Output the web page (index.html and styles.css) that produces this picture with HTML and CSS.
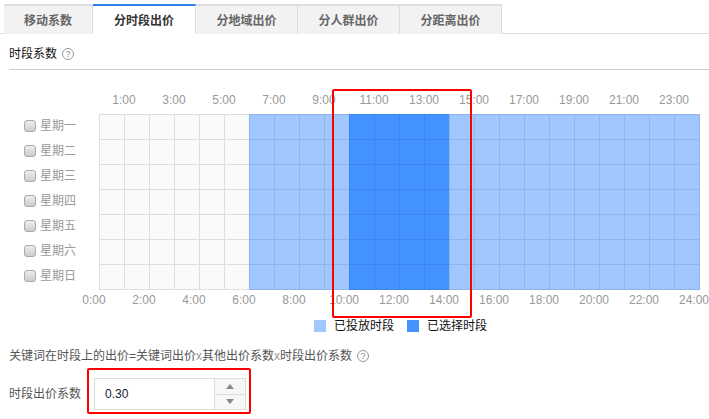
FILE: index.html
```
<!DOCTYPE html>
<html lang="zh-CN">
<head>
<meta charset="utf-8">
<title>时段系数</title>
<link rel="stylesheet" href="styles.css">
</head>
<body>
<nav class="tabs">
  <a class="tab tab-first">移动系数</a>
  <a class="tab active">分时段出价</a>
  <a class="tab">分地域出价</a>
  <a class="tab">分人群出价</a>
  <a class="tab">分距离出价</a>
</nav>
<div class="title">时段系数 <span class="help">?</span></div>
<div class="hours hours-top">
  <span>1:00</span><span>3:00</span><span>5:00</span><span>7:00</span><span>9:00</span><span>11:00</span><span>13:00</span><span>15:00</span><span>17:00</span><span>19:00</span><span>21:00</span><span>23:00</span>
</div>
<div class="week">
  <div class="row"><label class="day"><input type="checkbox" class="check">星期一</label><div class="seg off"></div><div class="seg on"></div><div class="seg sel"></div><div class="seg on rest"></div></div>
  <div class="row"><label class="day"><input type="checkbox" class="check">星期二</label><div class="seg off"></div><div class="seg on"></div><div class="seg sel"></div><div class="seg on rest"></div></div>
  <div class="row"><label class="day"><input type="checkbox" class="check">星期三</label><div class="seg off"></div><div class="seg on"></div><div class="seg sel"></div><div class="seg on rest"></div></div>
  <div class="row"><label class="day"><input type="checkbox" class="check">星期四</label><div class="seg off"></div><div class="seg on"></div><div class="seg sel"></div><div class="seg on rest"></div></div>
  <div class="row"><label class="day"><input type="checkbox" class="check">星期五</label><div class="seg off"></div><div class="seg on"></div><div class="seg sel"></div><div class="seg on rest"></div></div>
  <div class="row"><label class="day"><input type="checkbox" class="check">星期六</label><div class="seg off"></div><div class="seg on"></div><div class="seg sel"></div><div class="seg on rest"></div></div>
  <div class="row"><label class="day"><input type="checkbox" class="check">星期日</label><div class="seg off"></div><div class="seg on"></div><div class="seg sel"></div><div class="seg on rest"></div></div>
</div>
<div class="hours hours-bottom">
  <span>0:00</span><span>2:00</span><span>4:00</span><span>6:00</span><span>8:00</span><span>10:00</span><span>12:00</span><span>14:00</span><span>16:00</span><span>18:00</span><span>20:00</span><span>22:00</span><span>24:00</span>
</div>
<div class="legend">
  <i class="swatch swatch-on"></i><span>已投放时段</span>
  <i class="swatch swatch-sel"></i><span>已选择时段</span>
</div>
<p class="formula">关键词在时段上的出价=关键词出价<span class="times">x</span>其他出价系数<span class="times">x</span>时段出价系数 <span class="help">?</span></p>
<div class="field">
  <span class="field-label">时段出价系数</span>
  <div class="stepper">
    <input class="stepper-input" type="text" value="0.30">
    <div class="stepper-btns">
      <button class="step"><i class="arrow arrow-up"></i></button>
      <button class="step"><i class="arrow arrow-down"></i></button>
    </div>
  </div>
</div>
<div class="mark mark-hours"></div>
<div class="mark mark-input"></div>
</body>
</html>
```
FILE: styles.css
```
* { box-sizing: border-box; }
html, body { margin: 0; padding: 0; }
body {
  position: relative;
  width: 709px;
  height: 419px;
  padding-top: 4px;
  overflow: hidden;
  background: #fff;
  color: #666;
  font: 12px/16px "Liberation Sans", "Noto Sans CJK SC", sans-serif;
}
.tabs {
  display: flex;
  height: 30px;
  padding-left: 4px;
  border-bottom: 1px solid #ddd;
}
.tab {
  flex: none;
  width: 102px;
  height: 30px;
  padding-top: 2px;
  border-top: 2px solid #ddd;
  border-right: 1px solid #ddd;
  background: #f2f2f2;
  color: #666;
  font-weight: 700;
  line-height: 26px;
  text-align: center;
}
.tab-first { width: 89px; }
.tab.active {
  width: 103px;
  background: #fff;
  border-top-color: #2f80ed;
  color: #333;
}
.title {
  display: flex;
  align-items: center;
  gap: 5px;
  height: 36px;
  margin-left: 9px;
  padding-top: 4px;
  border-bottom: 1px solid #ccc;
  color: #111;
}
.help {
  display: inline-block;
  width: 12px;
  height: 12px;
  border: 1px solid #999;
  border-radius: 50%;
  color: #888;
  font-size: 9px;
  line-height: 10px;
  text-align: center;
}
.hours { display: flex; height: 16px; color: #999; }
.hours span { width: 50px; text-align: center; flex: none; }
.hours-top { margin: 22px 0 6px 99px; }
.hours-bottom { margin: 3px 0 0 69px; height: 18px; }
.week { display: flex; flex-direction: column; }
.row { display: flex; height: 25px; }
.day {
  display: flex;
  align-items: center;
  width: 99px;
  height: 25px;
  padding: 0 0 2px 24px;
  gap: 4px;
  color: #999;
}
.check {
  appearance: none;
  width: 12px;
  height: 12px;
  margin: 0;
  border: 1px solid #aaa;
  border-radius: 3px;
  background: linear-gradient(#eee, #ccc);
}
.seg {
  --line: #ddd;
  height: 25px;
  background-image:
    linear-gradient(to right, var(--line) 1px, transparent 1px),
    linear-gradient(to bottom, var(--line) 1px, transparent 1px);
  background-size: 25px 25px;
}
.off { width: 150px; background-color: #fafafa; }
.on { width: 100px; background-color: #a1c7ff; --line: #8fb4ec; }
.sel { width: 100px; background-color: #4392ff; --line: #3d86ec; }
.rest { width: 251px; border-right: 1px solid #8fb4ec; }
.row:last-child .seg { height: 26px; border-bottom: 1px solid #ddd; }
.row:last-child .on { border-bottom-color: #8fb4ec; }
.row:last-child .sel { border-bottom-color: #3d86ec; }
.legend {
  display: flex;
  align-items: center;
  height: 16px;
  margin-top: 8px;
  padding-left: 314px;
  color: #111;
}
.swatch { flex: none; width: 12px; height: 12px; margin-right: 8px; }
.swatch-on { background: #a1c7ff; }
.swatch-sel { background: #4392ff; margin-left: 13px; }
.formula {
  display: flex;
  align-items: center;
  height: 16px;
  margin: 14px 0 0 9px;
  color: #555;
}
.formula .help { margin-left: 5px; }
.times { color: #999; }
.field {
  display: flex;
  align-items: center;
  height: 32px;
  margin: 14px 0 0 9px;
}
.field-label { width: 85px; color: #555; }
.stepper {
  display: flex;
  width: 152px;
  height: 32px;
  border: 1px solid #ddd;
}
.stepper-input {
  width: 120px;
  height: 30px;
  padding: 0 0 0 10px;
  border: 0;
  border-right: 1px solid #ddd;
  outline: 0;
  color: #123;
  font: inherit;
}
.stepper-btns { display: flex; flex-direction: column; flex: 1; }
.step {
  display: flex;
  align-items: center;
  justify-content: center;
  flex: 1;
  padding: 0;
  border: 0;
  background: #f7f7f7;
}
.step + .step { border-top: 1px solid #ddd; }
.arrow { width: 0; height: 0; border-left: 4px solid transparent; border-right: 4px solid transparent; }
.arrow-up { border-bottom: 5px solid #888; }
.arrow-down { border-top: 5px solid #888; }
.mark {
  position: absolute;
  border: 2px solid #f00;
  border-radius: 2px;
}
.mark-hours { left: 332px; top: 89px; width: 140px; height: 229px; }
.mark-input { left: 87px; top: 368px; width: 164px; height: 46px; }
```
